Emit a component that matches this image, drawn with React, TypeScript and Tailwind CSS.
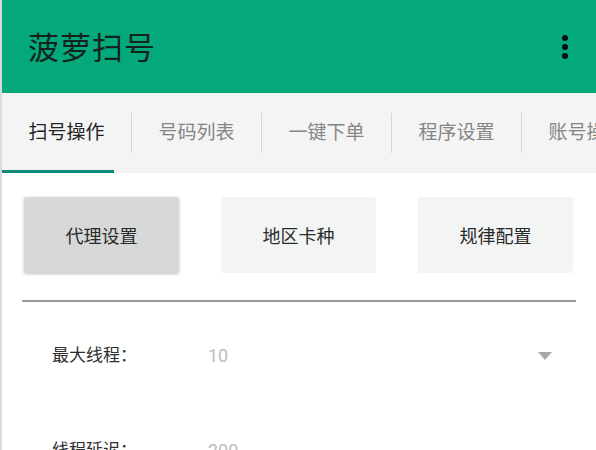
import { useState } from "react";

const tabs = ["扫号操作", "号码列表", "一键下单", "程序设置", "账号操作"];
const actions = ["代理设置", "地区卡种", "规律配置"];

const font = "font-['Roboto','Noto_Sans_CJK_SC',sans-serif]";

export default function App() {
  const [active, setActive] = useState(0);
  const [action, setAction] = useState(0);

  return (
    <div className={`h-[450px] w-[596px] overflow-hidden border-l-2 border-[#d9dcdb] bg-white ${font}`}>
      <header className="flex h-[93px] items-center justify-between bg-[#03a87b] pl-[26px] pr-[28px]">
        <h1 className="pt-[3px] text-[31px] leading-none tracking-[1px] text-[#14231c]">菠萝扫号</h1>
        <button className="flex flex-col gap-[3px]">
          <span className="h-[6px] w-[6px] rounded-full bg-[#0d0d0d]" />
          <span className="h-[6px] w-[6px] rounded-full bg-[#0d0d0d]" />
          <span className="h-[6px] w-[6px] rounded-full bg-[#0d0d0d]" />
        </button>
      </header>

      <nav className="relative flex h-[80px] items-center overflow-hidden whitespace-nowrap bg-[#f4f4f4]">
        {tabs.map((t, i) => (
          <div key={t} className="flex shrink-0 items-center">
            {i > 0 && <span className="h-[40px] w-px bg-[#d6d6d6]" />}
            <button
              onClick={() => setActive(i)}
              className={`w-[129px] text-center text-[19px] ${i === active ? "text-[#222]" : "text-[#858585]"}`}
            >
              {t}
            </button>
          </div>
        ))}
        <span className="absolute bottom-0 left-0 h-[3px] w-[112px] bg-[#0e8a7c]" />
      </nav>

      <main className="px-[20px]">
        <div className="mt-[24px] ml-[2px] flex w-[549px] justify-between">
          {actions.map((a, i) => (
            <button
              key={a}
              onClick={() => setAction(i)}
              className={`h-[76px] w-[155px] rounded-[2px] pt-[2px] text-[18px] text-[#2a2a2a] ${
                i === action ? "bg-[#d7d8d8] shadow-[0_1px_3px_rgba(0,0,0,0.25)]" : "bg-[#f3f4f4]"
              }`}
            >
              {a}
            </button>
          ))}
        </div>

        <div className="mt-[27px] h-[2px] w-[554px] bg-[#9a9a9a]" />

        <div className="flex items-center pt-[40px] pl-[30px]">
          <span className="w-[156px] text-[17px] text-[#2e2e2e]">最大线程：</span>
          <span className="flex-1 text-[18px] text-[#bdbdbd]">10</span>
          <span className="mr-[24px] h-0 w-0 border-x-[7px] border-t-[8px] border-x-transparent border-t-[#a8a8a8]" />
        </div>

        <div className="flex items-center pt-[68px] pl-[30px]">
          <span className="w-[156px] text-[17px] text-[#2e2e2e]">线程延迟：</span>
          <span className="flex-1 text-[18px] text-[#bdbdbd]">200</span>
        </div>
      </main>
    </div>
  );
}
